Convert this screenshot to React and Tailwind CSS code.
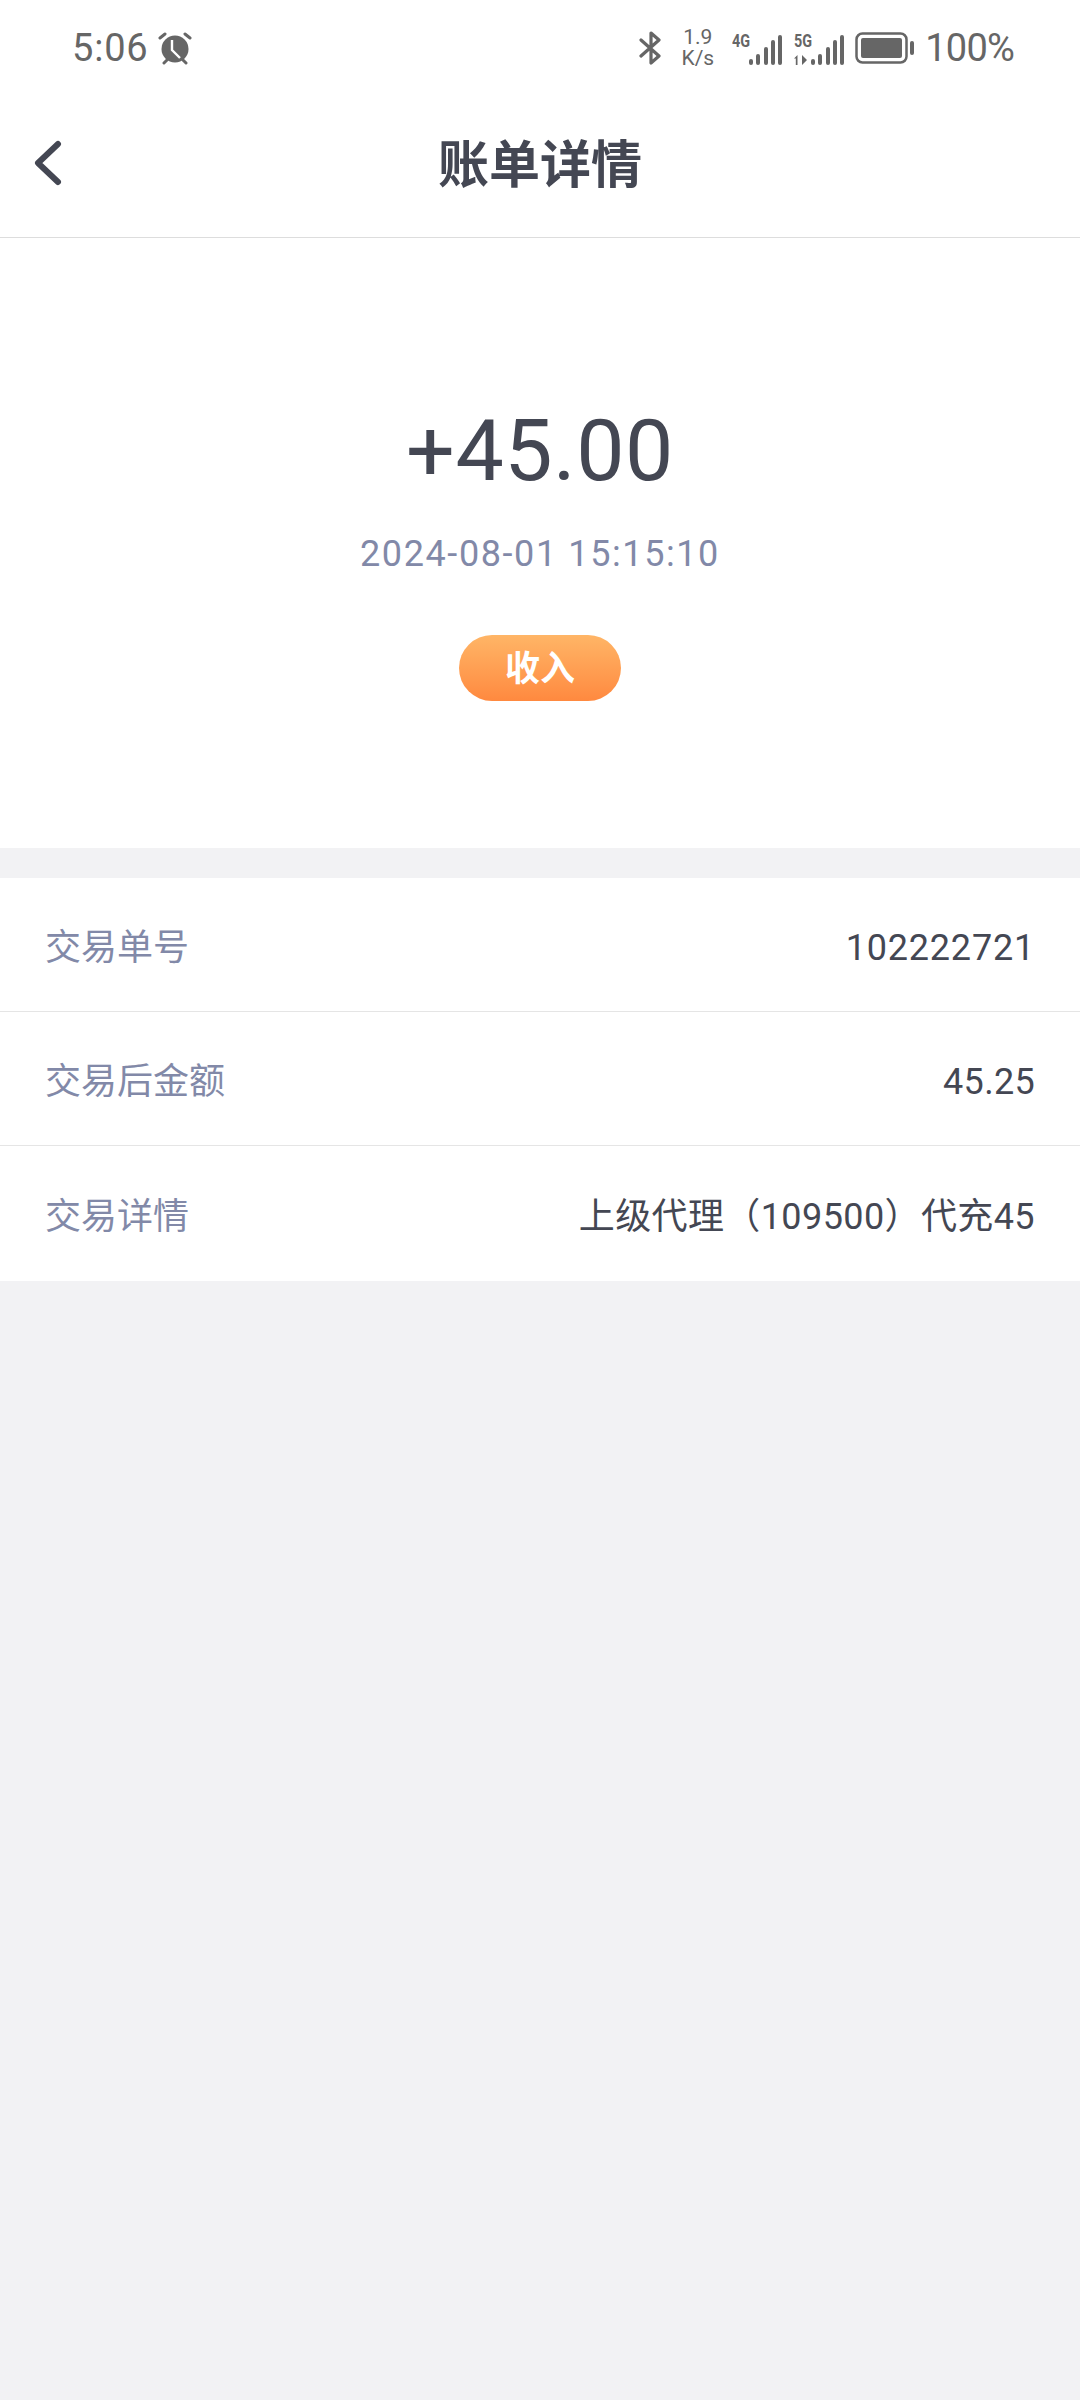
import React from 'react';

const cjk = "font-['Roboto','Noto_Sans_CJK_SC',sans-serif]";

const rows = [
  { label: '交易单号', value: '102222721', spacing: 'tracking-[0.8px]' },
  { label: '交易后金额', value: '45.25', spacing: 'tracking-[0.3px]' },
  { label: '交易详情', value: '上级代理（109500）代充45', spacing: 'tracking-[0.4px]' },
];

function StatusBar() {
  return (
    <div className="h-[92px] flex items-center justify-between pl-[72px] pr-[66px] pt-[3px] text-[#666666]">
      <div className="flex items-center">
        <span className="text-[38px] leading-none tracking-[0.8px]">5:06</span>
        <svg className="ml-[10px]" width="34" height="34" viewBox="0 0 34 34" fill="#666666">
          <circle cx="17" cy="18" r="13.5" />
          <path d="M14 9v10l8 8" stroke="#fff" strokeWidth="2.4" fill="none" />
          <path d="M2 7l5-4M32 7l-5-4M6 32l3-3M28 32l-3-3" stroke="#666666" strokeWidth="3" strokeLinecap="round" />
        </svg>
      </div>
      <div className="flex items-center">
        <svg width="22" height="34" viewBox="0 0 22 34" fill="none" stroke="#666666" strokeWidth="3.2" strokeLinejoin="round" strokeLinecap="round">
          <path d="M2 9l18 16-8 7V2l8 7L2 25" />
        </svg>
        <div className="ml-[20px] w-[33px] flex flex-col items-center text-[21px] leading-[21px]">
          <span>1.9</span>
          <span>K/s</span>
        </div>
        <Signal label="4G" className="ml-[18px]" />
        <Signal label="5G" className="ml-[12px]" arrows />
        <svg className="ml-[11px]" width="60" height="32" viewBox="0 0 60 32" fill="none">
          <rect x="1.5" y="1.5" width="50" height="29" rx="6" stroke="#666666" strokeWidth="2.5" />
          <rect x="6" y="6" width="41" height="20" rx="2" fill="#666666" />
          <rect x="55" y="9" width="4" height="14" rx="2" fill="#666666" />
        </svg>
        <span className="ml-[10px] text-[38px] leading-none tracking-[-0.8px]">100%</span>
      </div>
    </div>
  );
}

function Signal({ label, className, arrows }) {
  const bars = [6, 11, 18, 25, 30];
  return (
    <div className={`relative w-[50px] h-[34px] ${className}`}>
      <span className="absolute left-0 top-[1px] text-[18px] leading-[18px] font-bold scale-x-80 origin-left">{label}</span>
      {arrows && (
        <svg className="absolute left-0 bottom-0" width="14" height="10" viewBox="0 0 14 10" fill="#666666">
          <path d="M0 3.5L3.5 0V10H1.8V3.5zM8 0v10l5-5z" />
        </svg>
      )}
      <div className="absolute right-0 bottom-0 flex items-end gap-[3.3px]">
        {bars.map((h) => (
          <div key={h} className="w-[4px] rounded-full bg-[#666666]" style={{ height: h }} />
        ))}
      </div>
    </div>
  );
}

export default function App() {
  return (
    <div className={`min-h-[2400px] bg-[#f2f2f4] ${cjk}`}>
      <div className="bg-white">
        <StatusBar />
        <header className="relative h-[146px] flex items-center justify-center border-b border-[#dddddd]">
          <svg className="absolute left-[33px] top-[48px]" width="30" height="46" viewBox="0 0 30 46" fill="none" stroke="#444753" strokeWidth="6" strokeLinecap="round" strokeLinejoin="round">
            <path d="M25 4L5 23l20 19" />
          </svg>
          <h1 className="pt-[4px] text-[51px] font-bold text-[#444753]">账单详情</h1>
        </header>
      </div>

      <section className="bg-white h-[610px] flex flex-col items-center pt-[163px]">
        <div className="text-[86px] leading-[100px] tracking-[0.5px] text-[#444753]">+45.00</div>
        <div className="mt-[32px] text-[36px] leading-[42px] tracking-[1.6px] text-[#8289a8]">2024-08-01 15:15:10</div>
        <div className="mt-[60px] w-[162px] h-[66px] pt-[4px] rounded-full bg-gradient-to-b from-[#ffb566] to-[#ff893f] flex items-center justify-center text-[35px] font-bold text-white">
          收入
        </div>
      </section>

      <section className="mt-[30px] pb-[1px] bg-white divide-y divide-[#e5e5e5]">
        {rows.map((row) => (
          <div key={row.label} className="h-[134px] flex items-center justify-between px-[45px] pt-[7px] text-[36px]">
            <span className="text-[#8289a8]">{row.label}</span>
            <span className={`text-[#444753] ${row.spacing}`}>{row.value}</span>
          </div>
        ))}
      </section>
    </div>
  );
}
